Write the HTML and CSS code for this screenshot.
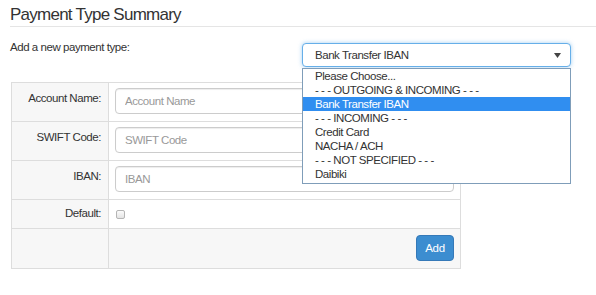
FILE: index.html
```html
<!DOCTYPE html>
<html lang="en">
<head>
  <meta charset="UTF-8">
  <title>Payment Type Summary</title>
  <link rel="stylesheet" href="styles.css">
</head>
<body>
  <h1 class="page-title">Payment Type Summary</h1>

  <div class="type-row">
    <label class="type-label">Add a new payment type:</label>
    <div class="type-select">
      <div class="select-box">
        <span>Bank Transfer IBAN</span>
        <svg class="caret" width="7" height="5" viewBox="0 0 7 5"><path d="M0 0H7L3.5 5Z" fill="#444"/></svg>
      </div>
      <ul class="dropdown">
        <li>Please Choose...</li>
        <li>- - - OUTGOING &amp; INCOMING - - -</li>
        <li class="active">Bank Transfer IBAN</li>
        <li>- - - INCOMING - - -</li>
        <li>Credit Card</li>
        <li>NACHA / ACH</li>
        <li>- - - NOT SPECIFIED - - -</li>
        <li>Daibiki</li>
      </ul>
    </div>
  </div>

  <table class="pay-form">
    <tr>
      <th>Account Name:</th>
      <td><input class="field" type="text" placeholder="Account Name"></td>
    </tr>
    <tr>
      <th>SWIFT Code:</th>
      <td><input class="field" type="text" placeholder="SWIFT Code"></td>
    </tr>
    <tr>
      <th>IBAN:</th>
      <td><input class="field" type="text" placeholder="IBAN"></td>
    </tr>
    <tr class="check-row">
      <th>Default:</th>
      <td><input class="check" type="checkbox"></td>
    </tr>
    <tr class="foot-row">
      <th></th>
      <td><button class="btn-add">Add</button></td>
    </tr>
  </table>
</body>
</html>
```

FILE: styles.css
```css
body { margin: 0; padding: 0 0 0 10px; font-family: "Liberation Sans", Arial, sans-serif; font-size: 11.5px; letter-spacing: -0.45px; color: #333; background: #fff; }
.page-title { margin: 0; padding: 5px 0 1px 0; font-size: 17px; line-height: 20px; font-weight: normal; letter-spacing: -0.75px; color: #333; border-bottom: 1px solid #e5e5e5; }

.type-row { display: flex; align-items: flex-start; margin-top: 13px; }
.type-label { width: 292px; line-height: 14px; }
.type-select { position: relative; width: 269px; margin-top: 3px; }
.select-box { box-sizing: border-box; height: 24px; padding: 0 9px 0 12px; display: flex; align-items: center; justify-content: space-between; border: 1px solid #66afe9; border-radius: 4px; box-shadow: 0 0 4px rgba(102,175,233,0.6); background: #fff; }
.caret { display: block; }
.dropdown { position: absolute; top: 25px; left: 0; right: 0; margin: 0; padding: 0 0 2px 0; list-style: none; background: #fff; border: 1px solid #7f9db9; z-index: 5; }
.dropdown li { height: 14px; line-height: 14px; padding-left: 12px; color: #333; white-space: nowrap; }
.dropdown li.active { background: #308ef0; color: #fff; }

.pay-form { margin: 15px 0 0 1px; width: 450px; border-collapse: collapse; table-layout: fixed; }
.pay-form th, .pay-form td { border: 1px solid #ddd; vertical-align: top; }
.pay-form th { width: 89px; padding: 8px 7px 0 0; text-align: right; font-weight: normal; line-height: 14px; background: #f7f7f7; }
.pay-form td { padding: 5px 6px 7px 6px; }
.field { box-sizing: border-box; display: block; width: 100%; height: 26px; margin: 0; padding: 0 9px; font-family: inherit; font-size: 11.5px; letter-spacing: -0.45px; color: #333; border: 1px solid #ccc; border-radius: 4px; box-shadow: inset 0 1px 1px rgba(0,0,0,0.075); }
.field::placeholder { color: #999; }
.check-row th { padding-top: 6px; height: 22px; }
.check-row td { padding: 10px 6px 6px 7px; }
.check { -webkit-appearance: none; appearance: none; display: block; margin: 0; width: 9px; height: 9px; border: 1px solid #b5b5b5; border-radius: 2px; background: linear-gradient(#fbfbfb, #e4e4e4); }
.foot-row th, .foot-row td { background: #f7f7f7; }
.foot-row td { padding: 6px 6px 6px 6px; text-align: right; height: 27px; }
.btn-add { height: 26px; width: 38px; padding: 0; font-family: inherit; font-size: 11.5px; letter-spacing: -0.3px; color: #fff; background: #3c8dd0; border: 1px solid #3579b8; border-radius: 4px; }
```
